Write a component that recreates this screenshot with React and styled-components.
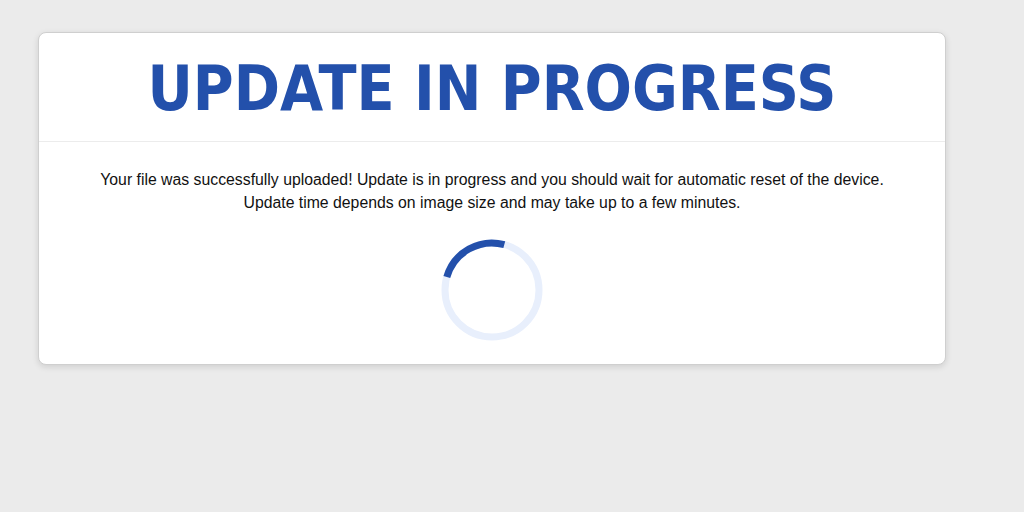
import React from 'react';
import styled, { createGlobalStyle } from 'styled-components';

const GlobalStyle = createGlobalStyle`
    html, body {
        margin: 0;
        padding: 0;
        background: #ebebeb;
        font-family: 'Liberation Sans', Arial, sans-serif;
    }
`;

const Page = styled.div`
    min-height: 512px;
    padding: 32px 0 0 38px;
    box-sizing: border-box;
`;

const Card = styled.div`
    width: 908px;
    box-sizing: border-box;
    background: #ffffff;
    border: 1px solid #cfcfcf;
    border-radius: 8px;
    box-shadow: 0 2px 6px rgba(0, 0, 0, 0.12);
    overflow: hidden;
`;

const Header = styled.div`
    height: 108px;
    display: flex;
    align-items: center;
    justify-content: center;
    border-bottom: 1px solid #ececec;
`;

const Title = styled.h1`
    margin: 3px 0 0;
    font-family: 'DejaVu Sans Condensed', 'DejaVu Sans', Tahoma, sans-serif;
    font-weight: bold;
    font-size: 62px;
    color: #2350ab;
    line-height: 1;
`;

const Body = styled.div`
    display: flex;
    flex-direction: column;
    align-items: center;
    padding: 26px 0 22px;
`;

const Message = styled.p`
    margin: 0;
    font-size: 15.8px;
    line-height: 23px;
    color: #111111;
    text-align: center;
`;

const Spinner = styled.svg`
    display: block;
    margin-top: 24px;
`;

function App() {
    return (
        <>
            <GlobalStyle />
            <Page>
                <Card>
                    <Header>
                        <Title>UPDATE IN PROGRESS</Title>
                    </Header>
                    <Body>
                        <Message>
                            Your file was successfully uploaded! Update is in progress and you should wait for automatic reset of the device.
                            <br />
                            Update time depends on image size and may take up to a few minutes.
                        </Message>
                        <Spinner width="104" height="104" viewBox="0 0 104 104">
                            <circle cx="52" cy="52" r="47" fill="none" stroke="#e8effc" strokeWidth="7" />
                            <circle
                                cx="52"
                                cy="52"
                                r="47"
                                fill="none"
                                stroke="#2350ab"
                                strokeWidth="7"
                                strokeDasharray="73 300"
                                transform="rotate(-164 52 52)"
                            />
                        </Spinner>
                    </Body>
                </Card>
            </Page>
        </>
    );
}

export default App;
